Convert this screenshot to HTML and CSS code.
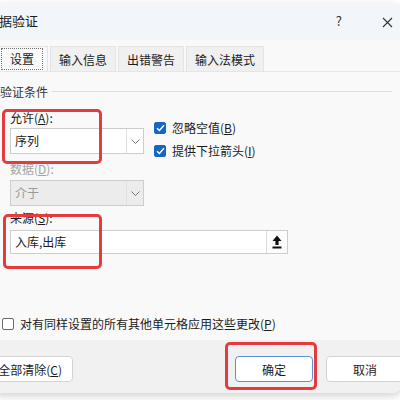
FILE: index.html
```html
<!DOCTYPE html>
<html lang="zh">
<head>
<meta charset="utf-8">
<link rel="stylesheet" href="styles.css">
</head>
<body>
<div class="dialog">
  <div class="titlebar">
    <span class="title">数据验证</span>
    <span class="help">?</span>
    <span class="close">
      <svg width="11" height="11" viewBox="0 0 11 11"><path d="M1 1L10 10M10 1L1 10" stroke="#333" stroke-width="1.1" fill="none"/></svg>
    </span>
  </div>
  <div class="tabs">
    <div class="tab active"><span class="focus">设置</span></div>
    <div class="tab">输入信息</div>
    <div class="tab">出错警告</div>
    <div class="tab">输入法模式</div>
  </div>
  <div class="panel">
    <div class="group-title"><span>验证条件</span><i class="rule"></i></div>
    <div class="cols">
      <div class="left">
        <div class="label first">允许(<u>A</u>):</div>
        <div class="select">
          <span class="val">序列</span>
          <span class="drop"><svg width="9" height="5" viewBox="0 0 9 5"><path d="M0.5 0.5L4.5 4.5L8.5 0.5" stroke="#777" fill="none"/></svg></span>
        </div>
        <div class="label second disabled">数据(<u>D</u>):</div>
        <div class="select off">
          <span class="val">介于</span>
          <span class="drop"><svg width="9" height="5" viewBox="0 0 9 5"><path d="M0.5 0.5L4.5 4.5L8.5 0.5" stroke="#777" fill="none"/></svg></span>
        </div>
      </div>
      <div class="right">
        <div class="check c1"><span class="box on"><svg width="9" height="8" viewBox="0 0 9 8"><path d="M1 4.2L3.4 6.5L8 1.3" stroke="#fff" stroke-width="1.4" fill="none"/></svg></span>忽略空值(<u>B</u>)</div>
        <div class="check c2"><span class="box on"><svg width="9" height="8" viewBox="0 0 9 8"><path d="M1 4.2L3.4 6.5L8 1.3" stroke="#fff" stroke-width="1.4" fill="none"/></svg></span>提供下拉箭头(<u>I</u>)</div>
      </div>
    </div>
    <div class="label src">来源(<u>S</u>):</div>
    <div class="input">
      <span class="val">入库,出库</span>
      <span class="pick"><svg width="10" height="14" viewBox="0 0 10 14"><path d="M5 0.5L9.5 6H6.6V10H3.4V6H0.5Z" fill="#111"/><rect x="0.5" y="11.5" width="9" height="2" fill="#111"/></svg></span>
    </div>
    <div class="check apply"><span class="box"></span>对有同样设置的所有其他单元格应用这些更改(<u>P</u>)</div>
  </div>
  <div class="footer">
    <div class="btn clear">全部清除(<u>C</u>)</div>
    <div class="btns">
      <div class="btn ok">确定</div>
      <div class="btn cancel">取消</div>
    </div>
  </div>
  <div class="mark m1"></div>
  <div class="mark m2"></div>
  <div class="mark m3"></div>
</div>
</body>
</html>
```
FILE: styles.css
```css
html, body {
  margin: 0;
  padding: 0;
  background: #ffffff;
  overflow: hidden;
  width: 400px;
  height: 400px;
}
body {
  font-family: "Noto Sans CJK SC", "Noto Sans", sans-serif;
  font-size: 12px;
  color: #1b1b1b;
}
u { text-decoration: underline; text-underline-offset: 1px; }

.dialog {
  position: relative;
  margin: 3px 0 0 -10px;
  width: 414px;
  height: 390px;
  border-radius: 13px;
  background: #f9f9f9;
  box-shadow: 0 3px 8px rgba(0,0,0,0.18);
  overflow: hidden;
  display: flex;
  flex-direction: column;
}

.titlebar {
  height: 37px;
  flex: none;
  background: #f2f5f9;
  display: flex;
  align-items: center;
  padding-left: 0;
}
.title { font-size: 13px; color: #1b1b1b; margin-top: -3px; margin-left: -4px; }
.help { margin-left: auto; margin-right: 40px; font-size: 13px; color: #333; margin-top: -2px; }
.close { margin-right: 11px; display: flex; margin-top: 1px; }

.tabs {
  flex: none;
  display: flex;
  gap: 2px;
  height: 25px;
  margin-top: 6px;
  padding-left: 6px;
  background: #f9f9f9;
  border-bottom: 1px solid #e6e6e6;
}
.tab {
  height: 24px;
  padding: 0 8px;
  display: flex;
  align-items: center;
  background: #f0f0f0;
  border: 1px solid #e4e4e4;
  border-bottom: none;
  color: #1b1b1b;
}
.tab.active {
  width: 52px;
  box-sizing: border-box;
  padding: 0;
  justify-content: center;
  background: #f9f9f9;
  height: 25px;
  margin-bottom: -1px;
}
.focus {
  border: 1px dotted #707070;
  padding: 2px 8px;
  line-height: 16px;
}

.panel {
  flex: 1;
  padding-left: 10px;
}
.group-title {
  display: flex;
  align-items: center;
  height: 16px;
  margin-top: 11px;
  color: #333;
}
.rule {
  flex: 1;
  height: 1px;
  background: #dedede;
  margin-left: 4px;
  margin-right: 12px;
}
.cols { display: flex; margin-left: 10px; }
.left { width: 134px; }
.label { line-height: 16px; height: 16px; }
.label.first { margin-top: 11px; }
.label.second { margin-top: 7px; }
.label.disabled { color: #a4a4a4; }
.select {
  margin-top: 2px;
  height: 26px;
  box-sizing: border-box;
  border: 1px solid #cdcdcd;
  background: #fff;
  display: flex;
  align-items: center;
}
.select.off { background: #ececec; color: #9a9a9a; margin-top: 3px; }
.select .val, .input .val { flex: 1; padding-left: 4px; line-height: 16px; }
.drop {
  width: 16px;
  height: 100%;
  border-left: 1px solid #e0e0e0;
  display: flex;
  align-items: center;
  justify-content: center;
}
.right { margin-left: 10px; }
.check {
  display: flex;
  align-items: center;
  line-height: 16px;
  height: 16px;
}
.check.c1 { margin-top: 21px; }
.check.c2 { margin-top: 7px; }
.box {
  width: 12px;
  height: 12px;
  box-sizing: border-box;
  border: 1px solid #6b6b6b;
  border-radius: 2px;
  background: #fff;
  margin-right: 6px;
  display: flex;
  align-items: center;
  justify-content: center;
}
.box.on { background: #1666c4; border-color: #1666c4; }

.label.src { margin: 4px 0 0 10px; }
.input {
  margin: 4px 0 0 10px;
  width: 278px;
  height: 24px;
  box-sizing: border-box;
  border: 1px solid #cdcdcd;
  background: #fff;
  display: flex;
  align-items: center;
}
.pick {
  width: 20px;
  height: 100%;
  border-left: 1px solid #dcdcdc;
  display: flex;
  align-items: center;
  justify-content: center;
  background: #fdfdfd;
}
.check.apply { margin: 62px 0 0 2px; }

.footer {
  flex: none;
  height: 53px;
  background: #f1f1f1;
  display: flex;
  justify-content: space-between;
  align-items: flex-start;
  padding-top: 16px;
  box-sizing: border-box;
}
.btn {
  height: 26px;
  box-sizing: border-box;
  border: 1px solid #d3d3d3;
  border-radius: 4px;
  background: #fff;
  display: flex;
  align-items: center;
  justify-content: center;
  color: #1b1b1b;
}
.btn.clear { width: 83px; justify-content: flex-end; padding-right: 10px; }
.btns { display: flex; gap: 13px; }
.btn.ok { width: 78px; border-color: #5d8fd4; }
.btn.cancel { width: 78px; margin-right: 0; }

.mark {
  position: absolute;
  border: 3px solid #e63b3c;
  border-radius: 5px;
  box-sizing: border-box;
}
.m1 { left: 12px; top: 106px; width: 100px; height: 55px; }
.m2 { left: 13px; top: 211px; width: 99px; height: 55px; }
.m3 { left: 235px; top: 339px; width: 92px; height: 48px; }
```
